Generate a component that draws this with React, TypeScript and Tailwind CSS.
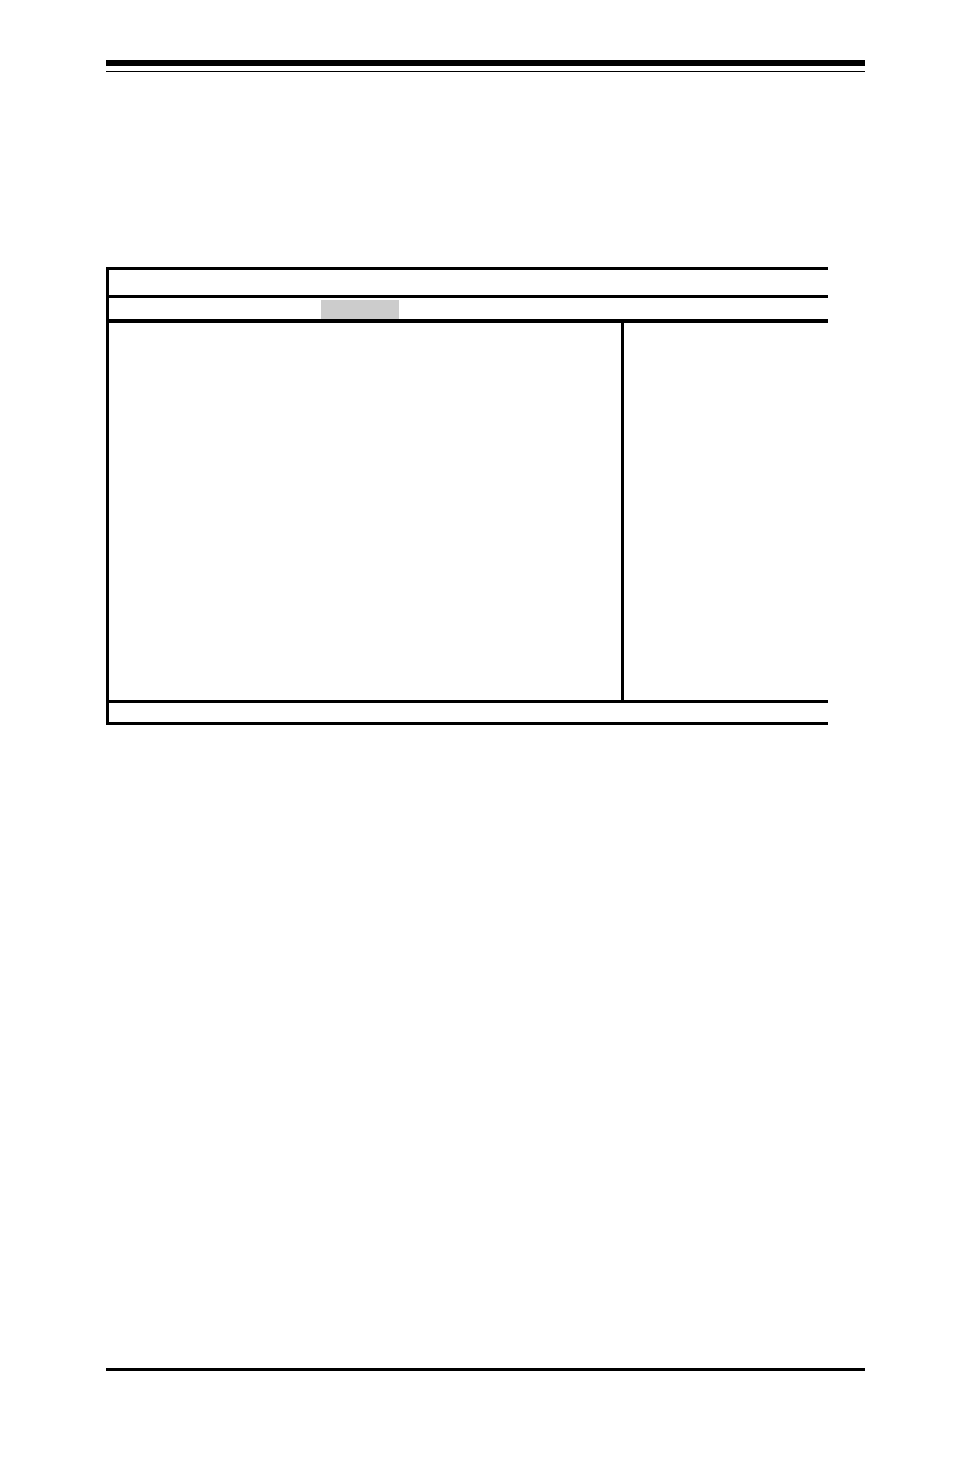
export default function App() {
  return (
    <div className="flex min-h-screen flex-col bg-white pt-[60px] pr-[89px] pb-[86px] pl-[106px]">
      <header className="h-3 border-t-6 border-b border-black" />

      <main className="mt-[195px] mr-[37px] mb-16">
        <section className="border-y-3 border-l-3 border-black">
          <div className="h-7 border-b-3 border-black" />
          <nav className="flex h-[25px] border-b-4 border-black pt-[2px] pl-[212px]">
            <div className="w-[78px] bg-[#cccccc]" />
          </nav>
          <div className="grid min-h-[377px] grid-cols-[minmax(0,1fr)_207px]">
            <div />
            <aside className="border-l-3 border-black" />
          </div>
          <div className="h-[22px] border-t-3 border-black" />
        </section>
      </main>

      <footer className="mt-auto border-t-3 border-black" />
    </div>
  );
}
